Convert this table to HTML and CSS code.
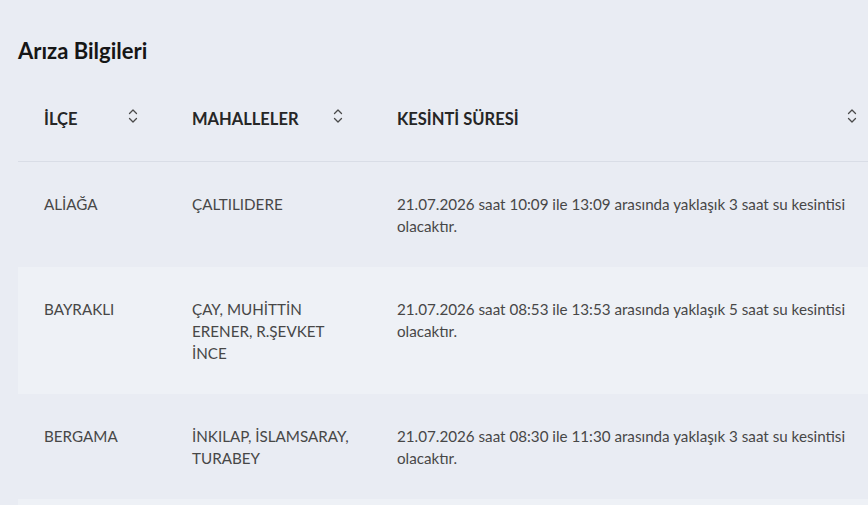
FILE: index.html
```html
<!DOCTYPE html>
<html lang="tr">
<head>
    <meta charset="UTF-8">
    <meta name="viewport" content="width=device-width, initial-scale=1.0">
    <link rel="stylesheet" href="styles.css">
    <title>Arıza Bilgileri</title>
</head>
<body>
    <main id="ariza">
        <h2 id="baslik">Arıza Bilgileri</h2>
        <table id="tablo">
            <colgroup>
                <col class="col-ilce">
                <col class="col-mahalle">
                <col class="col-sure">
            </colgroup>
            <thead>
                <tr>
                    <th>
                        <div class="th-icerik">
                            <span>İLÇE</span>
                            <svg class="sirala" width="10" height="18" viewBox="0 0 10 18"><path d="M1.5 6.5 L5 3 L8.5 6.5 M1.5 11.5 L5 15 L8.5 11.5" /></svg>
                        </div>
                    </th>
                    <th>
                        <div class="th-icerik">
                            <span>MAHALLELER</span>
                            <svg class="sirala" width="10" height="18" viewBox="0 0 10 18"><path d="M1.5 6.5 L5 3 L8.5 6.5 M1.5 11.5 L5 15 L8.5 11.5" /></svg>
                        </div>
                    </th>
                    <th>
                        <div class="th-icerik">
                            <span>KESİNTİ SÜRESİ</span>
                            <svg class="sirala" width="10" height="18" viewBox="0 0 10 18"><path d="M1.5 6.5 L5 3 L8.5 6.5 M1.5 11.5 L5 15 L8.5 11.5" /></svg>
                        </div>
                    </th>
                </tr>
            </thead>
            <tbody>
                <tr>
                    <td>ALİAĞA</td>
                    <td>ÇALTILIDERE</td>
                    <td>21.07.2026 saat 10:09 ile 13:09 arasında yaklaşık 3 saat su kesintisi olacaktır.</td>
                </tr>
                <tr>
                    <td>BAYRAKLI</td>
                    <td>ÇAY, MUHİTTİN ERENER, R.ŞEVKET İNCE</td>
                    <td>21.07.2026 saat 08:53 ile 13:53 arasında yaklaşık 5 saat su kesintisi olacaktır.</td>
                </tr>
                <tr>
                    <td>BERGAMA</td>
                    <td>İNKILAP, İSLAMSARAY, TURABEY</td>
                    <td>21.07.2026 saat 08:30 ile 11:30 arasında yaklaşık 3 saat su kesintisi olacaktır.</td>
                </tr>
                <tr class="bos">
                    <td></td>
                    <td></td>
                    <td></td>
                </tr>
            </tbody>
        </table>
    </main>
</body>
</html>
```

FILE: styles.css
```css
*{
    margin: 0;
    padding: 0;
    box-sizing: border-box;
    font-family: Lato, 'Open Sans', sans-serif;
}
body{
    background-color: #e9ecf3;
    overflow: hidden;
    width: 868px;
    height: 505px;
}
#ariza{
    padding: 37px 0 0 18px;
}
#baslik{
    font-size: 22px;
    line-height: 28px;
    font-weight: 700;
    color: #161616;
    margin-bottom: 12px;
}
#tablo{
    width: 867px;
    table-layout: fixed;
    border-collapse: collapse;
}
.col-ilce{
    width: 148px;
}
.col-mahalle{
    width: 205px;
}
.col-sure{
    width: 514px;
}
#tablo th{
    padding: 31px 28px 31px 26px;
    border-bottom: 1px solid #d9dde6;
    text-align: left;
}
.th-icerik{
    display: flex;
    align-items: center;
    justify-content: space-between;
    font-size: 16.5px;
    line-height: 22px;
    font-weight: 700;
    color: #262626;
}
.sirala{
    margin-top: -6px;
    fill: none;
    stroke: #4a4a4a;
    stroke-width: 1.3;
    stroke-linecap: round;
    stroke-linejoin: round;
}
#tablo td{
    padding: 31px 18px 30px 26px;
    vertical-align: top;
    font-size: 15.2px;
    line-height: 22px;
    color: #474747;
}
#tablo tbody tr:nth-child(even){
    background-color: #eef1f6;
}
.bos td{
    height: 60px;
}
```
